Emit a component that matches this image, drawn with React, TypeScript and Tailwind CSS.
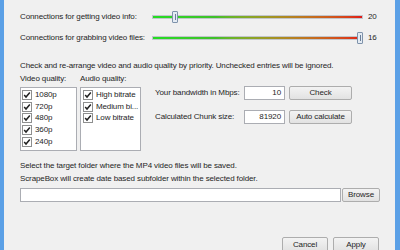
const video = ["1080p", "720p", "480p", "360p", "240p"];
const audio = ["High bitrate", "Medium bi...", "Low bitrate"];

function Slider({ thumb }: { thumb: string }) {
  return (
    <div className="relative w-[211px] h-[14px] flex items-center">
      <div className="w-full h-[4px] border border-[#c2c6cc] bg-gradient-to-r from-[#22dd22] via-[#3fc02a] via-30% to-[#e01818]" />
      {/* slider thumb */}
      <div className={`absolute top-[1px] w-[6px] h-[12px] flex justify-center items-center border border-[#7f93ab] bg-[#e4ebf3] rounded-[1px] ${thumb}`}>
        <div className="w-[1px] h-[6px] bg-[#6b7f99]" />
      </div>
    </div>
  );
}

function Box({ checked }: { checked?: boolean }) {
  return (
    <div className="w-[10px] h-[10px] shrink-0 border border-[#8e8f8f] bg-white flex items-center justify-center">
      {checked && (
        <svg width="8" height="8" viewBox="0 0 8 8">
          <polyline points="1.2,4 3,6 6.8,1.5" fill="none" stroke="#222" strokeWidth="1.5" />
        </svg>
      )}
    </div>
  );
}

function Btn({ label, w }: { label: string; w: string }) {
  return (
    <div className={`h-[14px] ${w} flex items-center justify-center border border-[#adadad] rounded-[2px] bg-gradient-to-b from-[#f3f3f3] to-[#e2e2e2]`}>
      {label}
    </div>
  );
}

export default function App() {
  return (
    <div className="w-[400px] h-[250px] flex bg-[#f0f0f0] overflow-hidden font-['Liberation_Sans',Arial,sans-serif] text-[8px] tracking-[-0.12px] leading-[12px] text-[#252525]">
      <div className="w-[4px] bg-[#5ba0e6]" />

      <div className="flex-1 flex flex-col pl-[16px] pt-[10px]">
        {/* sliders */}
        <div className="flex items-center h-[14px]">
          <div className="w-[132px]">Connections for getting video info:</div>
          <Slider thumb="left-[20px]" />
          <div className="ml-[5px]">20</div>
        </div>
        <div className="flex items-center h-[14px] mt-[7px]">
          <div className="w-[132px]">Connections for grabbing video files:</div>
          <Slider thumb="left-[205px]" />
          <div className="ml-[5px]">16</div>
        </div>

        <div className="mt-[15px]">Check and re-arrange video and audio quality by priority. Unchecked entries will be ignored.</div>

        <div className="flex mt-[1px]">
          <div className="w-[60px]">
            <div>Video quality:</div>
            <div className="mt-[2px] w-[57px] h-[64px] border border-[#abadb3] bg-white pt-[1px] pl-[1px]">
              {video.map((v) => (
                <div key={v} className="h-[11.75px] flex items-center gap-[3px]">
                  <Box checked />
                  <span>{v}</span>
                </div>
              ))}
            </div>
          </div>
          <div className="w-[75px]">
            <div>Audio quality:</div>
            <div className="mt-[2px] w-[61px] h-[64px] border border-[#abadb3] bg-white pt-[1px] pl-[2px]">
              {audio.map((a) => (
                <div key={a} className="h-[11.75px] flex items-center gap-[3px]">
                  <Box checked />
                  <span>{a}</span>
                </div>
              ))}
            </div>
          </div>

          <div className="pt-[13px] flex flex-col gap-[10px]">
            <div className="flex items-center">
              <div className="w-[89px]">Your bandwidth in Mbps:</div>
              <div className="w-[41px] h-[14px] border border-[#abadb3] bg-white text-right pr-[3px] leading-[12px]">10</div>
              <Btn label="Check" w="w-[63px] ml-[4px]" />
            </div>
            <div className="flex items-center">
              <div className="w-[89px]">Calculated Chunk size:</div>
              <div className="w-[41px] h-[14px] border border-[#abadb3] bg-white text-right pr-[3px] leading-[12px]">81920</div>
              <Btn label="Auto calculate" w="w-[63px] ml-[4px]" />
            </div>
          </div>
        </div>

        <div className="mt-[9px]">Select the target folder where the MP4 video files will be saved.</div>
        <div className="mt-[1px]">ScrapeBox will create date based subfolder within the selected folder.</div>
        <div className="flex items-center mt-[3px]">
          <div className="w-[321px] h-[14px] border border-[#abadb3] bg-white" />
          <Btn label="Browse" w="w-[38px] ml-[1px]" />
        </div>

        <div className="flex justify-end gap-[5px] mt-[35px] pr-[16px]">
          <Btn label="Cancel" w="w-[46px] h-[15px]" />
          <Btn label="Apply" w="w-[46px] h-[15px]" />
        </div>
      </div>

      <div className="w-[5px] bg-[#5ba0e6]" />
    </div>
  );
}
